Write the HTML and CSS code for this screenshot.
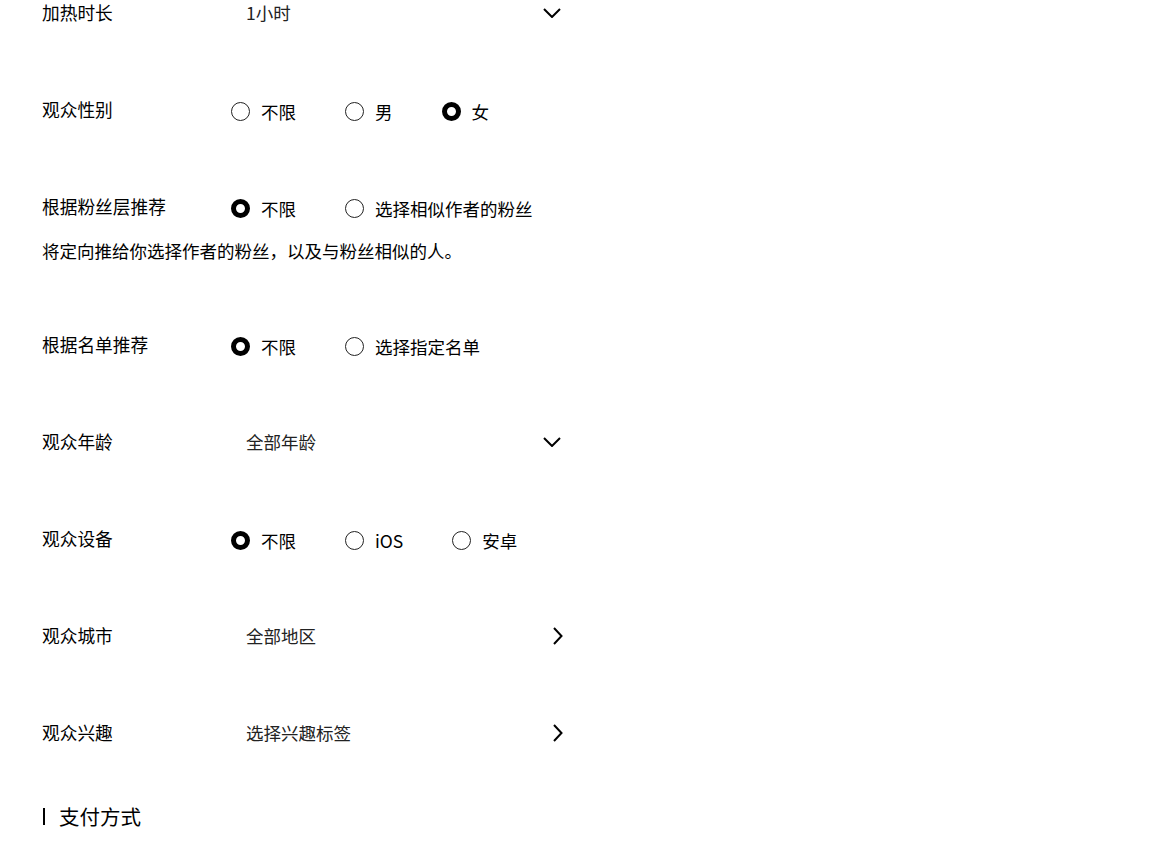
FILE: index.html
```html
<!DOCTYPE html>
<html lang="zh-CN">
<head>
<meta charset="utf-8">
<title>加热设置</title>
<link rel="stylesheet" href="styles.css">
</head>
<body>
<div class="page">
  <div class="form">
    <div class="field">
      <div class="label">加热时长</div>
      <div class="select">
        <span class="value">1小时</span>
        <svg class="chev-down" width="18" height="10" viewBox="0 0 18 10"><path d="M1 1 L9 9 L17 1" fill="none" stroke="#000" stroke-width="2"/></svg>
      </div>
    </div>

    <div class="field">
      <div class="label">观众性别</div>
      <div class="radios">
        <span class="opt"><span class="radio"></span>不限</span>
        <span class="opt"><span class="radio"></span>男</span>
        <span class="opt"><span class="radio on"></span>女</span>
      </div>
    </div>

    <div class="group">
      <div class="field">
        <div class="label">根据粉丝层推荐</div>
        <div class="radios">
          <span class="opt"><span class="radio on"></span>不限</span>
          <span class="opt"><span class="radio"></span>选择相似作者的粉丝</span>
        </div>
      </div>
      <div class="desc">将定向推给你选择作者的粉丝，以及与粉丝相似的人。</div>
    </div>

    <div class="field">
      <div class="label">根据名单推荐</div>
      <div class="radios">
        <span class="opt"><span class="radio on"></span>不限</span>
        <span class="opt"><span class="radio"></span>选择指定名单</span>
      </div>
    </div>

    <div class="field">
      <div class="label">观众年龄</div>
      <div class="select">
        <span class="value">全部年龄</span>
        <svg class="chev-down" width="18" height="10" viewBox="0 0 18 10"><path d="M1 1 L9 9 L17 1" fill="none" stroke="#000" stroke-width="2"/></svg>
      </div>
    </div>

    <div class="field">
      <div class="label">观众设备</div>
      <div class="radios">
        <span class="opt"><span class="radio on"></span>不限</span>
        <span class="opt"><span class="radio"></span>iOS</span>
        <span class="opt"><span class="radio"></span>安卓</span>
      </div>
    </div>

    <div class="field">
      <div class="label">观众城市</div>
      <div class="select">
        <span class="value">全部地区</span>
        <svg class="chev-right" width="10" height="18" viewBox="0 0 10 18"><path d="M1 1 L8.5 9 L1 17" fill="none" stroke="#000" stroke-width="2"/></svg>
      </div>
    </div>

    <div class="field">
      <div class="label">观众兴趣</div>
      <div class="select">
        <span class="value">选择兴趣标签</span>
        <svg class="chev-right" width="10" height="18" viewBox="0 0 10 18"><path d="M1 1 L8.5 9 L1 17" fill="none" stroke="#000" stroke-width="2"/></svg>
      </div>
    </div>
  </div>

  <div class="section-title">支付方式</div>
</div>
</body>
</html>
```
FILE: styles.css
```css
html, body {
  margin: 0;
  padding: 0;
  background: #fff;
}

body {
  font-family: "Noto Sans CJK SC", "Microsoft YaHei", sans-serif;
  color: #000;
  font-size: 17.5px;
}

.page {
  padding: 0 0 0 42px;
  width: 522px;
}

.form {
  display: flex;
  flex-direction: column;
  gap: 71px;
}

.field {
  display: flex;
  align-items: center;
  height: 26px;
}

.label {
  width: 189px;
  flex: none;
  font-size: 17.7px;
  line-height: 26px;
  color: #000;
  position: relative;
  top: -1px;
}

.select {
  flex: 1;
  display: flex;
  align-items: center;
  justify-content: space-between;
  padding-left: 15px;
  padding-right: 1px;
}

.value {
  font-size: 17.5px;
  color: #222;
  line-height: 26px;
}

.chev-down {
  margin-right: 2px;
}

.radios {
  display: flex;
  align-items: center;
  gap: 49px;
  padding-top: 3px;
}

.opt {
  display: flex;
  align-items: center;
  gap: 11px;
  font-size: 17.5px;
  line-height: 26px;
  color: #000;
}

.radio {
  width: 19px;
  height: 19px;
  box-sizing: border-box;
  border: 1px solid #222;
  border-radius: 50%;
  flex: none;
}

.radio.on {
  border: 5px solid #000;
}

.group {
  display: flex;
  flex-direction: column;
  margin-bottom: -3px;
}

.desc {
  margin-top: 18px;
  font-size: 17.5px;
  line-height: 26px;
  color: #000;
}

.section-title {
  margin-top: 57px;
  display: flex;
  align-items: center;
  gap: 14px;
  font-size: 20.5px;
  line-height: 26px;
  color: #000;
}

.section-title::before {
  content: "";
  width: 2px;
  height: 17px;
  background: #000;
  margin-left: 1px;
}
```
